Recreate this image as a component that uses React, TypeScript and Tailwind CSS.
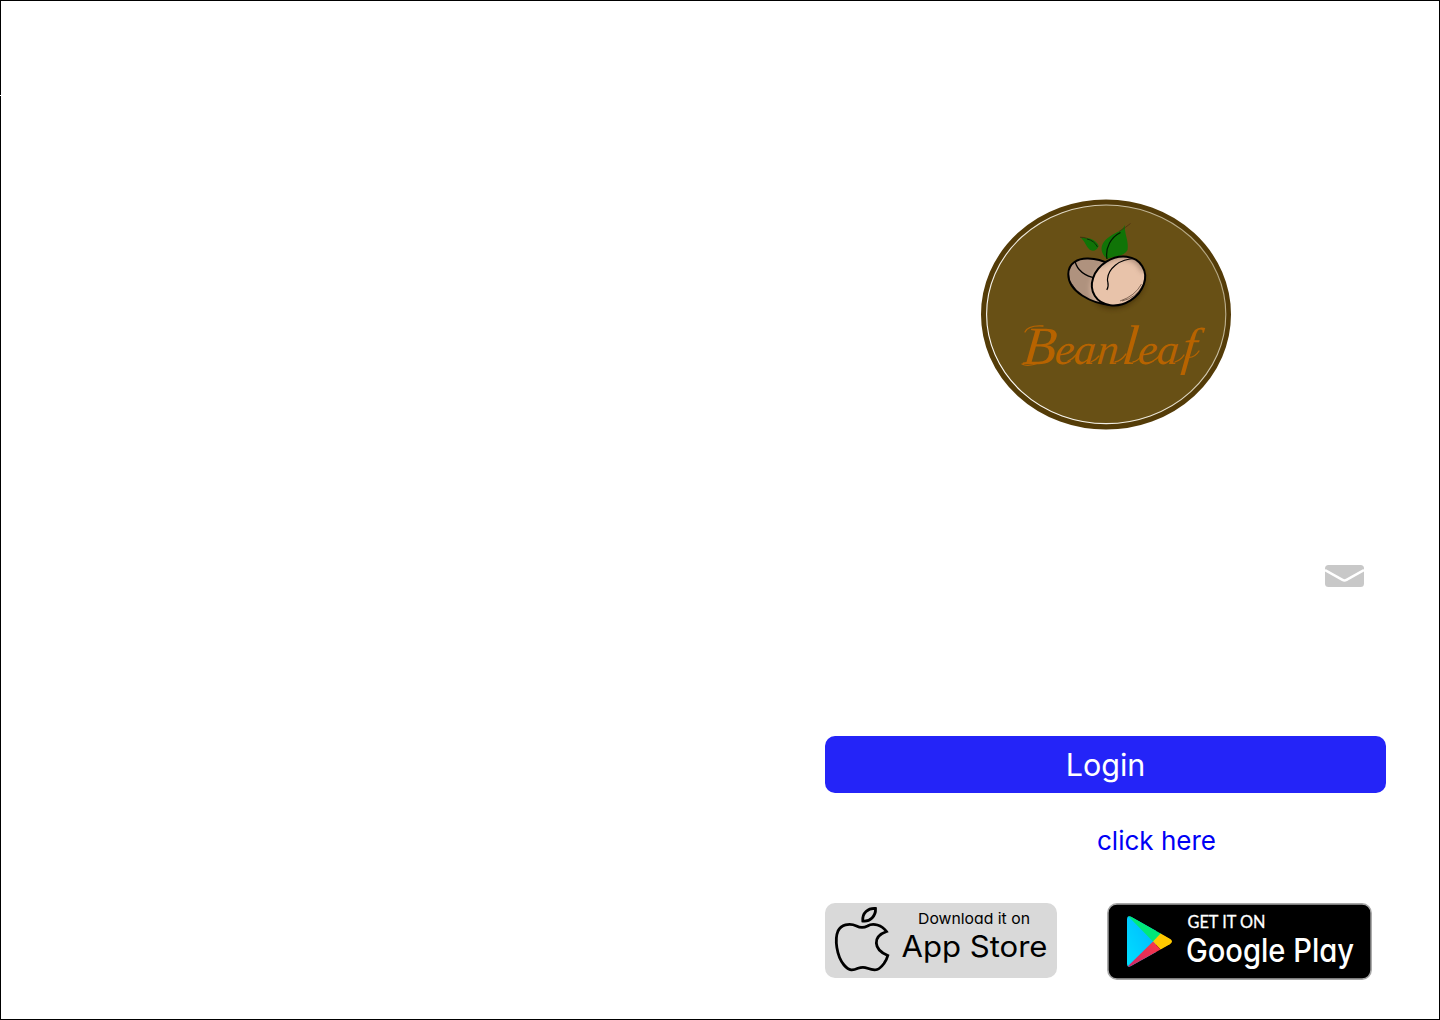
import React from "react";

function BeanleafLogo() {
  return (
    <svg width="252" height="232" viewBox="980 199 252 232" role="img" aria-label="Beanleaf" className="block">
      <defs>
        <linearGradient id="ring" x1="0" y1="0.8" x2="1" y2="0.2">
          <stop offset="0" stopColor="#ffffff" />
          <stop offset="0.5" stopColor="#e8e2d2" />
          <stop offset="1" stopColor="#ac9d75" />
        </linearGradient>
        <filter id="soft" x="-40%" y="-40%" width="180%" height="180%">
          <feGaussianBlur stdDeviation="2.4" />
        </filter>
        <clipPath id="backBean">
          <path d="M1112 305C1091 304 1068 291 1068.300 274C1068.500 263 1078 258.200 1088 258.500C1099 258.700 1106 262 1112 267Z" />
        </clipPath>
        <clipPath id="frontBean">
          <ellipse cx="1118.500" cy="281" rx="28" ry="22.800" transform="rotate(-32 1118.500 281)" />
        </clipPath>
      </defs>
      <ellipse cx="1106" cy="314.500" rx="122.300" ry="112.300" fill="#685015" stroke="#543c08" strokeWidth="5.400" />
      <ellipse cx="1106.200" cy="314.300" rx="119.600" ry="109.300" fill="none" stroke="url(#ring)" strokeWidth="1.100" />

      <path d="M1080 237C1088 237.500 1096 239 1098.700 246C1097 251 1092 252 1089 249C1086 246 1085 241 1080 237Z" fill="#107407" />
      <path d="M1080 237.200Q1084 237.200 1087 238.500" fill="none" stroke="#4a2a10" strokeWidth="0.900" />
      <path d="M1087 239C1092 240 1095.500 243 1097.500 247" fill="none" stroke="#0b2206" strokeWidth="0.900" />
      <path d="M1107 259C1097 250 1102 241 1112 235C1117 232 1122 231 1125 225C1124 234 1129 240 1127.500 250C1124 257 1113 256 1107 259Z" fill="#107407" />
      <path d="M1107 259C1105 248 1111 237 1120.500 232.500" fill="none" stroke="#001c00" strokeWidth="1.200" />
      <path d="M1119 231.500Q1125 228 1130.500 223.500" fill="none" stroke="#4a2a10" strokeWidth="0.700" />

      <ellipse cx="1118" cy="285" rx="28" ry="22" transform="rotate(-30 1118 285)" fill="#2d1d05" opacity="0.6" filter="url(#soft)" />
      <path d="M1112 305C1091 304 1068 291 1068.300 274C1068.500 263 1078 258.200 1088 258.500C1099 258.700 1106 262 1112 267Z" fill="#af927e" />
      <g clipPath="url(#backBean)">
        <ellipse cx="1119" cy="284" rx="30" ry="24" transform="rotate(-30 1119 284)" fill="#dcb9a2" filter="url(#soft)" />
        <path d="M1075 261C1077 270 1084 276 1097 278.500" fill="none" stroke="#000" strokeWidth="1.200" />
        <path d="M1072 284Q1077 294 1088 299" fill="none" stroke="#2b201b" strokeWidth="0.700" />
      </g>
      <path d="M1112 305C1091 304 1068 291 1068.300 274C1068.500 263 1078 258.200 1088 258.500C1097 258.700 1103 260.500 1108 264" fill="none" stroke="#000" strokeWidth="2" />
      <ellipse cx="1118.500" cy="281" rx="28" ry="22.800" transform="rotate(-32 1118.500 281)" fill="#e8c3aa" />
      <g clipPath="url(#frontBean)">
        <path d="M1096 263C1108 251 1138 247 1147 270" fill="none" stroke="#997b69" strokeWidth="12" opacity="0.7" filter="url(#soft)" />
        <path d="M1137 258.500C1118 258 1108 270 1107.500 279C1107 282 1110 285 1106.800 290" fill="none" stroke="#000" strokeWidth="1.200" />
        <path d="M1120 301Q1135 296 1141.500 284M1122 301Q1136 298 1143 285" fill="none" stroke="#3c2a20" strokeWidth="0.600" />
      </g>
      <ellipse cx="1118.500" cy="281" rx="28" ry="22.800" transform="rotate(-32 1118.500 281)" fill="none" stroke="#000" strokeWidth="2" />
      <text
        y="0"
        transform="translate(0 363.500) skewX(-6)"
        fill="#b76300"
        className="font-['Liberation_Serif',serif] text-[43px] italic"
      >
        <tspan x="1022" className="text-[54px]">B</tspan>
        <tspan x="1054 1073 1096">ean</tspan>
        <tspan x="1121" className="text-[56px]">l</tspan>
        <tspan x="1137 1156">ea</tspan>
        <tspan x="1181" className="text-[52px]">f</tspan>
      </text>
      <path
        d="M1025 332Q1028 325 1043 326M1022 364Q1027 367 1039 363M1068 361Q1073 359 1076 355M1091 362Q1096 360 1099 356M1115 362Q1121 361 1126 354M1133 362Q1138 361 1141 356M1153 361Q1157 359 1160 355M1175 362Q1181 360 1184 355M1186 357Q1194 359 1199 351"
        fill="none"
        stroke="#b76300"
        strokeWidth="1.300"
        strokeLinecap="round"
      />
    </svg>
  );
}

function MailIcon() {
  return (
    <svg width="39" height="22" viewBox="0 0 39 22" aria-hidden="true" className="block">
      <rect width="39" height="22" rx="3.500" fill="#c8c8c8" />
      <path d="M0 5L17.500 14.900Q19.500 16 21.500 14.900L39 5" fill="none" stroke="#fff" strokeWidth="2.500" />
    </svg>
  );
}

function AppStoreBadge() {
  return (
    <a className="flex h-[75px] w-[232px] rounded-[10px] bg-[#d9d9d9] text-black">
      <svg width="232" height="75" viewBox="825 903 232 75" role="img" aria-label="Download it on App Store">
        <g fill="none" stroke="#000" strokeWidth="2.800" strokeLinejoin="miter">
          <path d="M862.800 921C862 913 868 908 875.500 908.500C876 916 870 922 862.800 921Z" />
          <path d="M886.500 931.500C882 925 873 922.500 867.500 926C863.500 928 860.500 928 856.500 926C849 922.500 841 925 838 931C834.500 939 836.500 956 844 965C849.500 971.500 853 970.500 858 968.300Q863 966.500 867.500 968.300C876 971.500 879 970 884 963.500Q887 959 887.800 955.500C873 949.500 872.500 936.500 886.500 931.500Z" />
        </g>
        <text x="918" y="924" textLength="112" lengthAdjust="spacingAndGlyphs" className="font-['Inter',sans-serif] text-[15px] [font-feature-settings:'cv11']">
          Download it on
        </text>
        <text x="901.500" y="957.300" textLength="146" lengthAdjust="spacingAndGlyphs" className="font-['Inter',sans-serif] text-[29.500px] [font-feature-settings:'cv11']">
          App Store
        </text>
      </svg>
    </a>
  );
}

function GooglePlayBadge() {
  return (
    <a className="block h-[77px] w-[265px]">
      <svg width="265" height="77" viewBox="1107 903 265 77" role="img" aria-label="Get it on Google Play">
        <defs>
          <linearGradient id="blue" x1="1" y1="0" x2="0" y2="1">
            <stop offset="0" stopColor="#00b4ff" />
            <stop offset="1" stopColor="#00e1ff" />
          </linearGradient>
          <linearGradient id="red" x1="1" y1="0" x2="0" y2="1">
            <stop offset="0" stopColor="#ff3a44" />
            <stop offset="1" stopColor="#c9236b" />
          </linearGradient>
          <clipPath id="play">
            <path d="M1127 919Q1127 915 1131 916.800L1170 938.800Q1174 941.500 1170 944.200L1131 966Q1127 968 1127 964Z" />
          </clipPath>
        </defs>
        <rect x="1107.900" y="903.900" width="263.200" height="75.200" rx="9" fill="#000" stroke="#a6a6a6" strokeWidth="1.600" />
        <g clipPath="url(#play)">
          <rect x="1126" y="914" width="30" height="54" fill="url(#blue)" />
          <path d="M1126 914L1153 941.500L1162 933.500L1128 914Z" fill="#00e879" />
          <path d="M1153 941.500L1161 933L1175 941.500L1161 950Z" fill="#ffc900" />
          <path d="M1153 941.500L1161 950L1128 969L1126 968Z" fill="url(#red)" />
        </g>
        <text x="1187.500" y="928" fill="#fff" stroke="#fff" strokeWidth="0.300" textLength="78" lengthAdjust="spacingAndGlyphs" className="font-['Lato',sans-serif] text-[17px]">
          GET IT ON
        </text>
        <text x="1186" y="962" fill="#fff" textLength="168" lengthAdjust="spacingAndGlyphs" className="font-['Inter',sans-serif] text-[32px] font-medium [font-feature-settings:'cv11']">
          Google Play
        </text>
      </svg>
    </a>
  );
}

export default function App() {
  return (
    <main className="relative flex h-[1020px] w-[1440px] justify-end border border-black bg-white pr-[53px] font-['Inter',sans-serif] [font-feature-settings:'cv11']">
      <span className="absolute -left-px top-[94px] h-px w-px bg-white" />
      <section className="flex w-[561px] flex-col pt-[198px]">
        <div className="ml-[155px]">
          <BeanleafLogo />
        </div>
        <div className="mt-[134px] flex justify-end pr-[22px]">
          <MailIcon />
        </div>
        <button className="mt-[149px] flex h-[57px] w-full items-center justify-center rounded-[10px] bg-[#2424f8] text-[30.500px] text-white">
          <span>Login</span>
        </button>
        <a className="ml-[272px] mt-7 flex h-10 items-center whitespace-nowrap text-[26px] leading-10 text-[#0000f5]">
          click here
        </a>
        <div className="mt-[42px] flex items-start justify-between pr-[14px]">
          <AppStoreBadge />
          <GooglePlayBadge />
        </div>
      </section>
    </main>
  );
}
